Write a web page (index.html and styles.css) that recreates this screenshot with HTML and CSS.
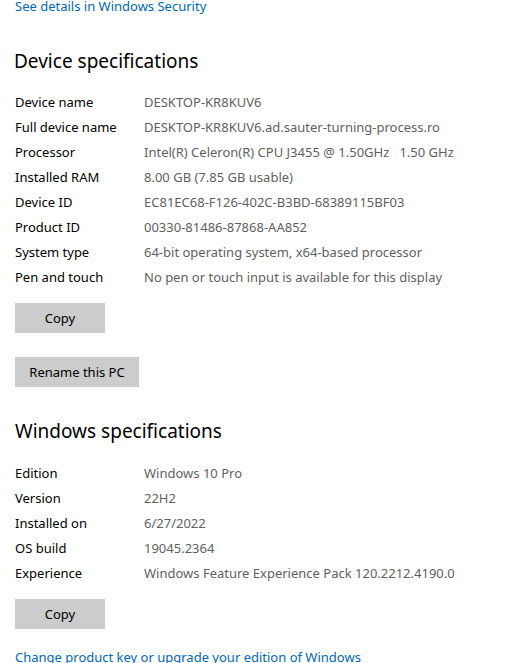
FILE: index.html
```html
<!DOCTYPE html>
<html lang="en">
<head>
<meta charset="utf-8">
<title>About</title>
<link rel="stylesheet" href="styles.css">
</head>
<body>
<main class="page">
  <a class="link link-top" href="#">See details in Windows Security</a>

  <section class="section">
    <h2 class="heading heading-device">Device specifications</h2>
    <dl class="specs">
      <dt>Device name</dt><dd>DESKTOP-KR8KUV6</dd>
      <dt>Full device name</dt><dd>DESKTOP-KR8KUV6.ad.sauter-turning-process.ro</dd>
      <dt>Processor</dt><dd>Intel(R) Celeron(R) CPU J3455 @ 1.50GHz&nbsp;&nbsp; 1.50 GHz</dd>
      <dt>Installed RAM</dt><dd>8.00 GB (7.85 GB usable)</dd>
      <dt>Device ID</dt><dd>EC81EC68-F126-402C-B3BD-68389115BF03</dd>
      <dt>Product ID</dt><dd>00330-81486-87868-AA852</dd>
      <dt>System type</dt><dd>64-bit operating system, x64-based processor</dd>
      <dt>Pen and touch</dt><dd>No pen or touch input is available for this display</dd>
    </dl>
    <button class="btn btn-copy" type="button">Copy</button>
    <button class="btn btn-rename" type="button">Rename this PC</button>
  </section>

  <section class="section">
    <h2 class="heading heading-windows">Windows specifications</h2>
    <dl class="specs specs-windows">
      <dt>Edition</dt><dd>Windows 10 Pro</dd>
      <dt>Version</dt><dd>22H2</dd>
      <dt>Installed on</dt><dd>6/27/2022</dd>
      <dt>OS build</dt><dd>19045.2364</dd>
      <dt>Experience</dt><dd>Windows Feature Experience Pack 120.2212.4190.0</dd>
    </dl>
    <button class="btn btn-copy" type="button">Copy</button>
  </section>

  <a class="link link-bottom" href="#">Change product key or upgrade your edition of Windows</a>
</main>
</body>
</html>
```

FILE: styles.css
```css
html, body {
  margin: 0;
  padding: 0;
  background: #ffffff;
}

body {
  font-family: "Noto Sans", "Open Sans", "Liberation Sans", sans-serif;
  font-size: 13px;
  color: #000000;
  overflow: hidden;
}

.page {
  display: flex;
  flex-direction: column;
  align-items: flex-start;
  padding-left: 15px;
}

.link {
  display: block;
  color: #0067b8;
  text-decoration: none;
  line-height: 20px;
  font-size: 13px;
}

.link-top {
  margin-top: -4px;
}

.link-bottom {
  margin-top: 18px;
}

.section {
  display: flex;
  flex-direction: column;
  align-items: flex-start;
}

.heading {
  margin: 31px 0 0 0;
  font-size: 19px;
  font-weight: 400;
  line-height: 28px;
  color: #000000;
}

.heading-device {
  margin-left: -1px;
}

.heading-windows {
  margin-top: 30px;
}

.specs {
  display: grid;
  grid-template-columns: 129px auto;
  margin: 15px 0 0 0;
  line-height: 25px;
}

.specs-windows {
  margin-top: 16px;
}

.specs dt {
  margin: 0;
  color: #000000;
  white-space: nowrap;
}

.specs dd {
  margin: 0;
  color: #5f5f5f;
  white-space: nowrap;
}

.btn {
  font-family: inherit;
  font-size: 13px;
  color: #000000;
  background: #cccccc;
  border: 0;
  border-radius: 0;
  height: 30px;
  padding: 0;
  margin: 0;
  cursor: pointer;
}

.btn-copy {
  width: 90px;
  margin-top: 13px;
}

.btn-rename {
  width: 124px;
  margin-top: 24px;
}
```
